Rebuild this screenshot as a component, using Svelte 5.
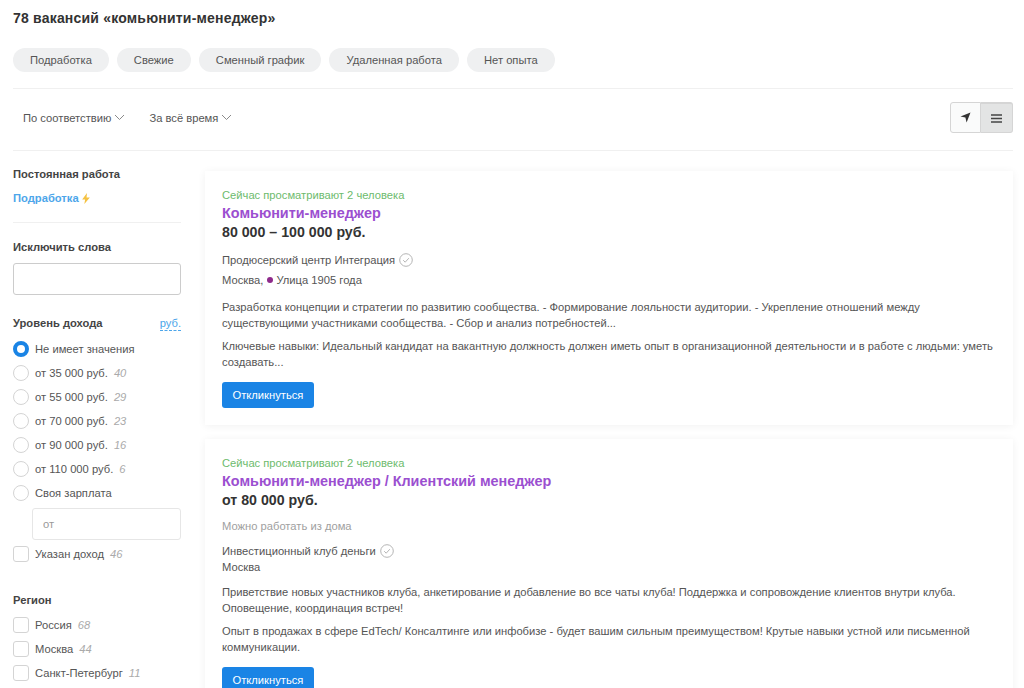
<script>
  const chips = ['Подработка', 'Свежие', 'Сменный график', 'Удаленная работа', 'Нет опыта'];
  const incomes = [
    { label: 'от 35 000 руб.', count: 40 },
    { label: 'от 55 000 руб.', count: 29 },
    { label: 'от 70 000 руб.', count: 23 },
    { label: 'от 90 000 руб.', count: 16 },
    { label: 'от 110 000 руб.', count: 6 }
  ];
  const regions = [
    { label: 'Россия', count: 68 },
    { label: 'Москва', count: 44 },
    { label: 'Санкт-Петербург', count: 11 }
  ];
</script>

{#snippet chevron()}
  <svg class="chevron" width="11" height="7" viewBox="0 0 11 7"><path d="M1 1l4.5 4.5L10 1" fill="none" stroke="#8a8a8a" stroke-width="1" /></svg>
{/snippet}

{#snippet verified()}
  <svg class="verified" width="14" height="14" viewBox="0 0 14 14">
    <circle cx="7" cy="7" r="6.3" fill="none" stroke="#b5b5b5" stroke-width="1" />
    <path d="M4.2 7.2l2 2 3.6-4" fill="none" stroke="#b5b5b5" stroke-width="1" />
  </svg>
{/snippet}

<div class="page">
  <h1>78 вакансий «комьюнити-менеджер»</h1>

  <div class="chips">
    {#each chips as chip}
      <span class="chip">{chip}</span>
    {/each}
  </div>

  <div class="sortbar">
    <div class="sorts">
      <span class="sort">По соответствию {@render chevron()}</span>
      <span class="sort">За всё время {@render chevron()}</span>
    </div>
    <div class="views">
      <button class="view">
        <svg width="11" height="11" viewBox="0 0 11 11"><path d="M10.5 .5L6.6 10.5 5.4 5.6 .5 4.4z" fill="#333" /></svg>
      </button>
      <button class="view active">
        <svg width="11" height="9" viewBox="0 0 11 9"><path d="M0 1h11M0 4.5h11M0 8h11" stroke="#444" stroke-width="1.6" /></svg>
      </button>
    </div>
  </div>

  <div class="content">
    <aside>
      <div class="side-title">Постоянная работа</div>
      <div class="parttime">
        <span>Подработка</span>
        <svg width="8" height="11" viewBox="0 0 7 10"><path d="M4.4 0L0 5.8h2.7L2 10l5-6H4z" fill="#f5c242" /></svg>
      </div>
      <div class="side-sep"></div>

      <div class="side-title">Исключить слова</div>
      <input class="field" type="text" />

      <div class="income-head">
        <span class="side-title">Уровень дохода</span>
        <span class="currency">руб.</span>
      </div>
      <div class="opt"><span class="radio on"></span>Не имеет значения</div>
      {#each incomes as item}
        <div class="opt"><span class="radio"></span>{item.label}<i>{item.count}</i></div>
      {/each}
      <div class="opt"><span class="radio"></span>Своя зарплата</div>
      <input class="field from" type="text" placeholder="от" />
      <div class="opt"><span class="check"></span>Указан доход<i>46</i></div>

      <div class="side-title region">Регион</div>
      {#each regions as item}
        <div class="opt"><span class="check"></span>{item.label}<i>{item.count}</i></div>
      {/each}
    </aside>

    <main>
      <article class="card">
        <div class="watching">Сейчас просматривают 2 человека</div>
        <a class="job" href="#top">Комьюнити-менеджер</a>
        <div class="salary">80 000 – 100 000 руб.</div>
        <div class="company first">Продюсерский центр Интеграция {@render verified()}</div>
        <div class="city spaced">Москва, <span class="metro"></span>Улица 1905 года</div>
        <p class="desc">Разработка концепции и стратегии по развитию сообщества. - Формирование лояльности аудитории. - Укрепление отношений между существующими участниками сообщества. - Сбор и анализ потребностей...</p>
        <p class="desc">Ключевые навыки: Идеальный кандидат на вакантную должность должен иметь опыт в организационной деятельности и в работе с людьми: уметь создавать...</p>
        <button class="apply">Откликнуться</button>
      </article>

      <article class="card">
        <div class="watching">Сейчас просматривают 2 человека</div>
        <a class="job" href="#top">Комьюнити-менеджер / Клиентский менеджер</a>
        <div class="salary">от 80 000 руб.</div>
        <div class="remote">Можно работать из дома</div>
        <div class="company">Инвестиционный клуб деньги {@render verified()}</div>
        <div class="city">Москва</div>
        <p class="desc">Приветствие новых участников клуба, анкетирование и добавление во все чаты клуба! Поддержка и сопровождение клиентов внутри клуба. Оповещение, координация встреч!</p>
        <p class="desc">Опыт в продажах в сфере EdTech/ Консалтинге или инфобизе - будет вашим сильным преимуществом! Крутые навыки устной или письменной коммуникации.</p>
        <button class="apply">Откликнуться</button>
      </article>
    </main>
  </div>
</div>

<style>
  :global(body) {
    margin: 0;
    background: #fff;
    overflow: hidden;
  }

  .page {
    box-sizing: border-box;
    height: 688px;
    overflow: hidden;
    padding: 0 11px 0 13px;
    font-family: "Liberation Sans", Arial, sans-serif;
    font-size: 11.2px;
    color: #555;
  }

  h1 {
    margin: 0;
    padding-top: 11px;
    font-size: 14px;
    line-height: 15px;
    font-weight: 700;
    color: #333;
    letter-spacing: 0.2px;
  }

  .chips {
    display: flex;
    gap: 8px;
    margin-top: 22px;
    padding-bottom: 16px;
    border-bottom: 1px solid #f0f0f0;
  }

  .chip {
    padding: 0 17px;
    height: 24px;
    line-height: 24px;
    border-radius: 12px;
    background: #eff0f1;
    color: #555;
  }

  .sortbar {
    display: flex;
    align-items: center;
    justify-content: space-between;
    box-sizing: border-box;
    height: 62px;
    padding-bottom: 4px;
    border-bottom: 1px solid #f0f0f0;
  }

  .sorts {
    display: flex;
    gap: 24px;
    padding-left: 10px;
  }

  .sort {
    display: flex;
    align-items: center;
    gap: 3px;
  }

  .views {
    display: flex;
  }

  .view {
    display: flex;
    align-items: center;
    justify-content: center;
    box-sizing: border-box;
    width: 31px;
    height: 31px;
    padding: 0;
    border: 1px solid #d5d5d5;
    background: #fafbfb;
    border-radius: 3px 0 0 3px;
  }

  .view.active {
    width: 32px;
    background: #e3e4e4;
    border-left: 0;
    border-top-width: 2px;
    border-radius: 0 3px 3px 0;
  }

  .content {
    display: grid;
    grid-template-columns: 168px 1fr;
    gap: 24px;
    padding-top: 17px;
  }

  .side-title {
    font-weight: 700;
    color: #444;
    line-height: 13px;
  }

  .parttime {
    display: flex;
    align-items: center;
    gap: 3px;
    margin-top: 11px;
    font-weight: 700;
    color: #4da6ea;
    line-height: 13px;
  }

  .side-sep {
    height: 1px;
    background: #f0f0f0;
    margin: 17px 0 18px;
  }

  .field {
    display: block;
    box-sizing: border-box;
    width: 100%;
    height: 32px;
    margin-top: 9px;
    padding: 0 10px;
    border: 1px solid #ccc;
    border-radius: 3px;
    background: #fff;
    font: inherit;
  }

  .field.from {
    width: 149px;
    margin: 3px 0 2px 19px;
    border-color: #e6e6e6;
  }

  .field::placeholder {
    color: #999;
  }

  .income-head {
    display: flex;
    justify-content: space-between;
    margin-top: 22px;
    margin-bottom: 6px;
  }

  .currency {
    color: #4da6ea;
    border-bottom: 1px dashed #4da6ea;
    line-height: 13px;
  }

  .opt {
    display: flex;
    align-items: center;
    height: 24px;
    color: #555;
  }

  .opt i {
    margin-left: 6px;
    color: #aaa;
  }

  .radio,
  .check {
    box-sizing: border-box;
    flex: none;
    width: 16px;
    height: 16px;
    margin-right: 6px;
    border: 1.5px solid #d4d4d4;
    background: #fff;
  }

  .radio {
    border-radius: 50%;
  }

  .radio.on {
    border: 4px solid #1a84e5;
  }

  .check {
    border-radius: 3px;
  }

  .region {
    margin-top: 28px;
    margin-bottom: 6px;
  }

  main {
    display: flex;
    flex-direction: column;
    gap: 14px;
    padding-top: 3px;
  }

  .card {
    padding: 17px 17px 17px;
    background: #fff;
    box-shadow: 0 1px 8px rgba(0, 0, 0, 0.06);
  }

  .watching {
    color: #6dbb6d;
    line-height: 14px;
  }

  .job {
    display: block;
    margin-top: 1px;
    font-size: 14.4px;
    line-height: 20px;
    font-weight: 700;
    color: #9b4fd0;
    text-decoration: none;
  }

  .salary {
    font-size: 14.2px;
    line-height: 18px;
    font-weight: 700;
    color: #333;
  }

  .remote {
    margin-top: 10px;
    color: #a0a0a0;
    line-height: 14px;
  }

  .company {
    display: flex;
    align-items: center;
    gap: 4px;
    margin-top: 11px;
    line-height: 14px;
  }

  .company.first {
    margin-top: 12px;
  }

  .city {
    line-height: 14px;
    margin-top: 2px;
  }

  .city.spaced {
    margin-top: 6px;
  }

  .metro {
    display: inline-block;
    width: 6px;
    height: 6px;
    margin: 0 3px 1px 1px;
    border-radius: 50%;
    background: #8e2a8b;
  }

  .desc {
    margin: 10px 0 0;
    line-height: 16px;
    color: #555;
  }

  .city.spaced + .desc {
    margin-top: 12px;
  }

  .desc + .desc {
    margin-top: 7px;
  }

  .apply {
    display: block;
    height: 26px;
    margin-top: 12px;
    padding: 0 10.5px;
    border: 0;
    border-radius: 3px;
    background: #1a84e5;
    color: #fff;
    font: inherit;
  }
</style>
